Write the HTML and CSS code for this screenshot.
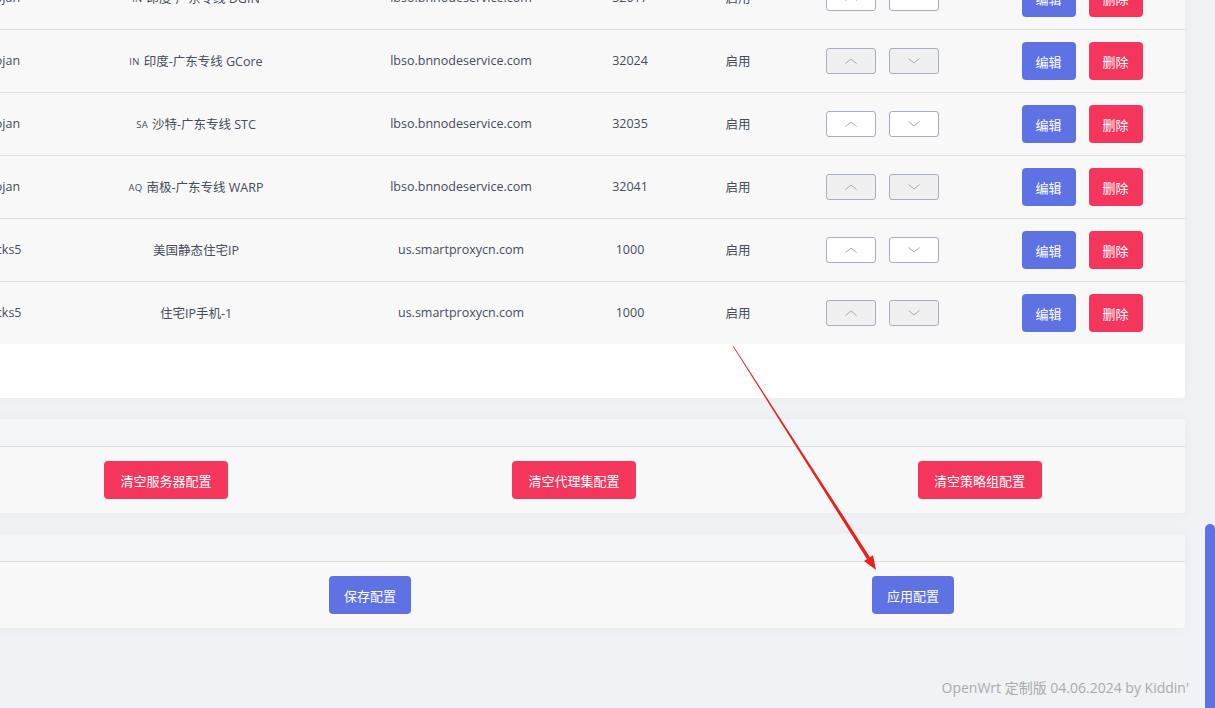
FILE: index.html
```html
<!DOCTYPE html>
<html lang="zh-CN">
<head>
<meta charset="utf-8">
<title>OpenClash</title>
<link rel="stylesheet" href="styles.css">
</head>
<body>
<div class="viewport">
  <div class="main">
    <div class="card table-card">
      <div class="row row-white">
        <div class="cell first">Trojan</div>
        <div class="cell"><span class="flag">IN</span> 印度-广东专线 DGIN</div>
        <div class="cell">lbso.bnnodeservice.com</div>
        <div class="cell">32017</div>
        <div class="cell">启用</div>
        <div class="cell move"><button class="mv"><svg width="14" height="8" viewBox="0 0 14 8"><polyline points="1.5,6.5 7,2 12.5,6.5"/></svg></button><button class="mv"><svg width="14" height="8" viewBox="0 0 14 8"><polyline points="1.5,1.5 7,6 12.5,1.5"/></svg></button></div>
        <div class="cell acts"><button class="btn blue">编辑</button><button class="btn red">删除</button></div>
      </div>
      <div class="row row-grey">
        <div class="cell first">Trojan</div>
        <div class="cell"><span class="flag">IN</span> 印度-广东专线 GCore</div>
        <div class="cell">lbso.bnnodeservice.com</div>
        <div class="cell">32024</div>
        <div class="cell">启用</div>
        <div class="cell move"><button class="mv"><svg width="14" height="8" viewBox="0 0 14 8"><polyline points="1.5,6.5 7,2 12.5,6.5"/></svg></button><button class="mv"><svg width="14" height="8" viewBox="0 0 14 8"><polyline points="1.5,1.5 7,6 12.5,1.5"/></svg></button></div>
        <div class="cell acts"><button class="btn blue">编辑</button><button class="btn red">删除</button></div>
      </div>
      <div class="row row-white">
        <div class="cell first">Trojan</div>
        <div class="cell"><span class="flag">SA</span> 沙特-广东专线 STC</div>
        <div class="cell">lbso.bnnodeservice.com</div>
        <div class="cell">32035</div>
        <div class="cell">启用</div>
        <div class="cell move"><button class="mv"><svg width="14" height="8" viewBox="0 0 14 8"><polyline points="1.5,6.5 7,2 12.5,6.5"/></svg></button><button class="mv"><svg width="14" height="8" viewBox="0 0 14 8"><polyline points="1.5,1.5 7,6 12.5,1.5"/></svg></button></div>
        <div class="cell acts"><button class="btn blue">编辑</button><button class="btn red">删除</button></div>
      </div>
      <div class="row row-grey">
        <div class="cell first">Trojan</div>
        <div class="cell"><span class="flag">AQ</span> 南极-广东专线 WARP</div>
        <div class="cell">lbso.bnnodeservice.com</div>
        <div class="cell">32041</div>
        <div class="cell">启用</div>
        <div class="cell move"><button class="mv"><svg width="14" height="8" viewBox="0 0 14 8"><polyline points="1.5,6.5 7,2 12.5,6.5"/></svg></button><button class="mv"><svg width="14" height="8" viewBox="0 0 14 8"><polyline points="1.5,1.5 7,6 12.5,1.5"/></svg></button></div>
        <div class="cell acts"><button class="btn blue">编辑</button><button class="btn red">删除</button></div>
      </div>
      <div class="row row-white">
        <div class="cell first">Socks5</div>
        <div class="cell">美国静态住宅IP</div>
        <div class="cell">us.smartproxycn.com</div>
        <div class="cell">1000</div>
        <div class="cell">启用</div>
        <div class="cell move"><button class="mv"><svg width="14" height="8" viewBox="0 0 14 8"><polyline points="1.5,6.5 7,2 12.5,6.5"/></svg></button><button class="mv"><svg width="14" height="8" viewBox="0 0 14 8"><polyline points="1.5,1.5 7,6 12.5,1.5"/></svg></button></div>
        <div class="cell acts"><button class="btn blue">编辑</button><button class="btn red">删除</button></div>
      </div>
      <div class="row row-grey">
        <div class="cell first">Socks5</div>
        <div class="cell">住宅IP手机-1</div>
        <div class="cell">us.smartproxycn.com</div>
        <div class="cell">1000</div>
        <div class="cell">启用</div>
        <div class="cell move"><button class="mv"><svg width="14" height="8" viewBox="0 0 14 8"><polyline points="1.5,6.5 7,2 12.5,6.5"/></svg></button><button class="mv"><svg width="14" height="8" viewBox="0 0 14 8"><polyline points="1.5,1.5 7,6 12.5,1.5"/></svg></button></div>
        <div class="cell acts"><button class="btn blue">编辑</button><button class="btn red">删除</button></div>
      </div>
      <div class="table-foot"></div>
    </div>

    <div class="card section">
      <div class="sec-head"></div>
      <div class="sec-body three">
        <div class="slot"><button class="btn red wide">清空服务器配置</button></div>
        <div class="slot"><button class="btn red wide">清空代理集配置</button></div>
        <div class="slot"><button class="btn red wide">清空策略组配置</button></div>
      </div>
    </div>

    <div class="card section">
      <div class="sec-head"></div>
      <div class="sec-body two">
        <div class="slot"><button class="btn blue mid">保存配置</button></div>
        <div class="slot"><button class="btn blue mid">应用配置</button></div>
      </div>
    </div>

    <div class="footer">OpenWrt 定制版 04.06.2024 by Kiddin'</div>
  </div>

  <div class="scrollbar"></div>

  <svg class="arrow" width="1215" height="708" viewBox="0 0 1215 708">
    <polygon points="733.3,345.8 732.7,346.2 867.0,559.2 870.0,557.2" fill="#e8221b"/>
    <polygon points="876,570 873.0,555.2 864.0,561.0" fill="#e8221b"/>
  </svg>
</div>
</body>
</html>
```

FILE: styles.css
```css
* { box-sizing: border-box; }

html, body {
  margin: 0;
  padding: 0;
  background: #f1f2f5;
}

body {
  font-family: "Open Sans", "Noto Sans CJK SC", sans-serif;
  font-size: 12.5px;
  color: #464c59;
}

.viewport {
  position: relative;
  width: 1215px;
  height: 708px;
  overflow: hidden;
}

.main {
  width: 1227px;
  margin-left: -42px;
  margin-top: -34px;
}

.card {
  background: #fff;
  border-radius: 4px;
  box-shadow: 0 0 12px rgba(120, 130, 150, 0.07);
  overflow: hidden;
}

.row {
  display: grid;
  grid-template-columns: 82px 312px 218px 120px 96px 193px 206px;
  height: 63px;
  border-top: 1px solid #dfe0e3;
  background: #f8f8f9;
}

.cell {
  display: flex;
  align-items: center;
  justify-content: center;
  white-space: nowrap;
  padding-bottom: 2px;
}

.first {
  padding-left: 5px;
}

.flag {
  font-size: 9.5px;
  letter-spacing: 0.3px;
  margin-right: 4px;
  margin-top: 2px;
}

.move, .acts {
  gap: 13px;
  padding-bottom: 0;
}

.mv {
  width: 50px;
  height: 26px;
  border: 1px solid #a3aebf;
  border-radius: 3px;
  background: #fff;
  padding: 0;
  display: flex;
  align-items: center;
  justify-content: center;
}

.row-grey .mv { background: #f0f0f0; }

.mv svg polyline {
  fill: none;
  stroke: #a4abb5;
  stroke-width: 1;
}

.btn {
  border: 0;
  border-radius: 4px;
  color: #fff;
  font-family: "Noto Sans CJK SC", sans-serif;
  font-size: 13px;
  height: 38px;
  width: 54px;
  padding: 0;
}

.blue { background: #5e72e4; }
.red { background: #f5365c; }
.wide { width: 124px; }
.mid { width: 82px; }

.table-foot {
  height: 54px;
  background: #fff;
}

.section {
  margin-top: 21px;
  background: #f8f8f9;
}

.sec-head {
  height: 28px;
  background: #f4f7fa;
  border-bottom: 1px solid #dcdee2;
}

.sec-body {
  height: 66px;
  display: grid;
  align-items: center;
}

.three { grid-template-columns: 416px 400px 1fr; }
.two { grid-template-columns: 824px 262px 1fr; }

.slot {
  display: flex;
  justify-content: center;
}

.footer {
  margin-top: 49px;
  margin-right: -4px;
  text-align: right;
  font-family: "Open Sans", "Noto Sans CJK SC", sans-serif;
  font-size: 14px;
  color: #a9abb0;
}

.scrollbar {
  position: absolute;
  right: 0;
  top: 524px;
  width: 10px;
  height: 190px;
  background: #5e72e4;
  border-radius: 5px 5px 0 0;
}

.arrow {
  position: absolute;
  left: 0;
  top: 0;
  pointer-events: none;
}
```
